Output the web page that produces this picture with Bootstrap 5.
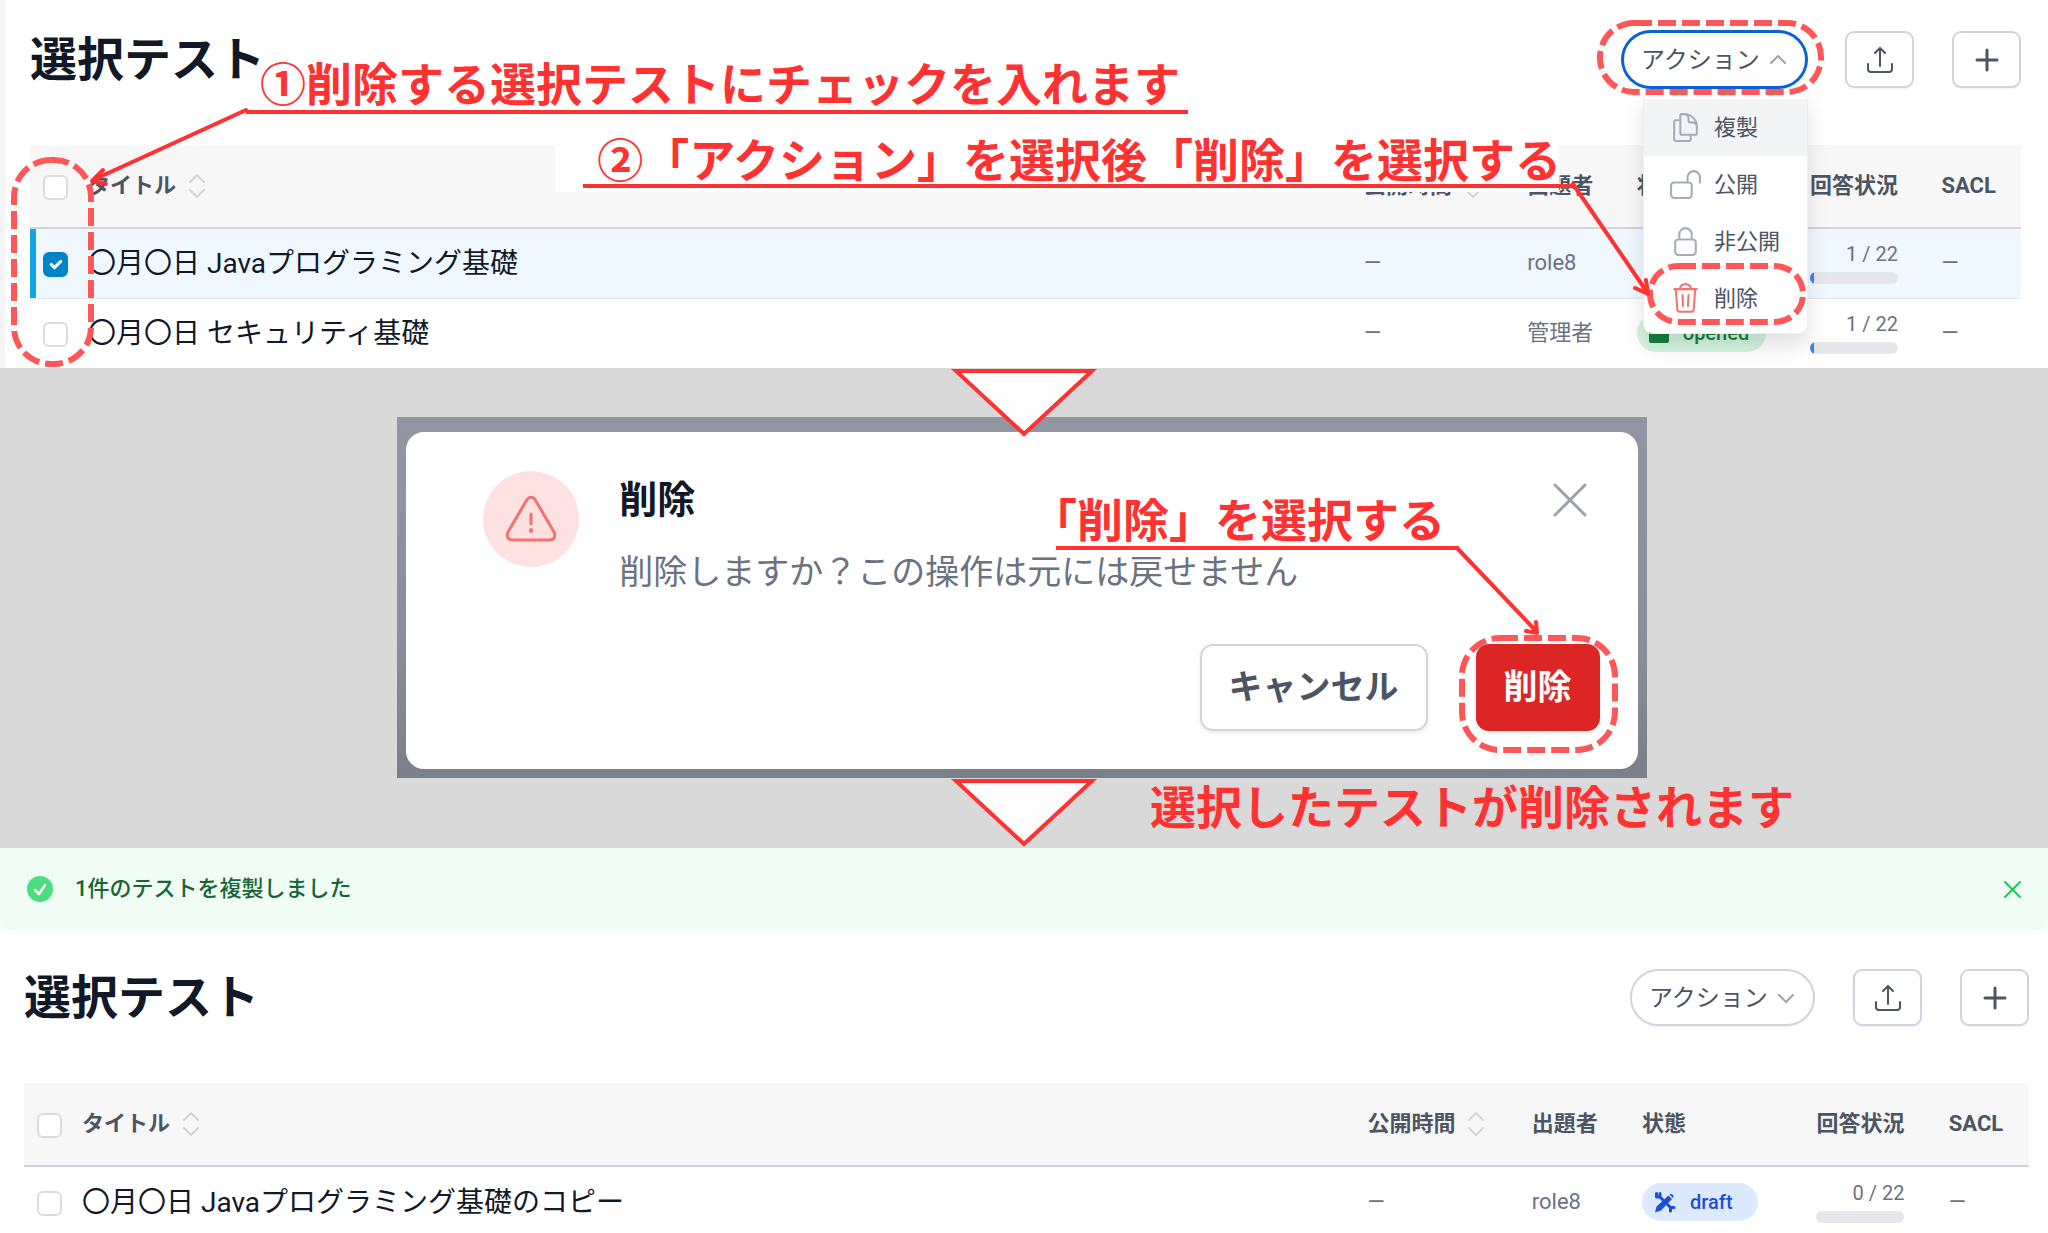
<!DOCTYPE html>
<html lang="ja">
<head>
<meta charset="utf-8">
<meta name="viewport" content="width=device-width, initial-scale=1">
<title>選択テスト</title>
<link href="https://cdn.jsdelivr.net/npm/bootstrap@5.3.0/dist/css/bootstrap.min.css" rel="stylesheet">
<script src="https://cdn.jsdelivr.net/npm/bootstrap@5.3.0/dist/js/bootstrap.bundle.min.js"></script>
<style>
  body { font-family: Roboto, "Noto Sans CJK JP", sans-serif; font-size: 22px; line-height: 32px; color: #4b5563; background: #fff; overflow-x: hidden; }
  svg { display: block; flex: none; fill: none; stroke: currentColor; stroke-linecap: round; stroke-linejoin: round; }
  svg.solid { stroke: none; }

  /* Screens */
  .screen-list { padding: 31px 27px 0 25px; border-left: 5px solid #f3f4f6; }
  .screen-done .screen-body { padding: 39px 19px 0 24px; }
  .page-title { font-size: 47px; line-height: 57px; font-weight: 700; color: #111827; }
  .toolbar { gap: 38px; margin-bottom: 57px; }
  .tool-btn { --bs-btn-color: #4b5563; --bs-btn-bg: #fff; --bs-btn-border-color: #d1d5db; --bs-btn-border-width: 2px; --bs-btn-hover-bg: #f9fafb; --bs-btn-hover-color: #4b5563; --bs-btn-hover-border-color: #d1d5db; height: 57px; box-shadow: 0 1px 2px rgba(0,0,0,.06); }
  .tool-square { width: 69px; padding: 0; border-radius: 9px; }
  .tool-action { width: 185px; padding: 0 18px 0 17px; border-radius: 29px; font-size: 24px; color: #4b5563; }
  .tool-action svg { color: #9ca3af; }
  .tool-action.is-open { border-color: #0b62d6; box-shadow: 0 0 0 1px #0b62d6; }

  /* Test list */
  .test-table { table-layout: fixed; margin: 0; --bs-table-bg: transparent; color: #6b7280; }
  .test-table > :not(caption) > * > * { padding: 0; border: 0; vertical-align: middle; }
  .test-table thead th { height: 83px; background: #f7f7f7; border-bottom: 2px solid #d1d5db !important; color: #4b5563; font-weight: 700; }
  .test-table tbody td { height: 70px; }
  .test-table tbody tr + tr td { border-top: 1px solid #e5e7eb; }
  .test-table .row-picked td { background: #eff8ff; }
  .row-picked td:first-child { box-shadow: inset 6px 0 #0ea5e9; }
  .test-table .col-name { padding-top: 2px; font-size: 28px; color: #111827; }
  .col-check { width: 58px; }
  .test-table .col-check { padding-left: 13px; }
  .w-open { width: 8.2%; } .w-author { width: 5.5%; } .w-state { width: 8.7%; } .w-answer { width: 6.6%; } .w-sacl { width: 4%; }
  .check-box { display: block; width: 25px; height: 25px; margin: 3px 0 0; border: 2px solid #d9dce2; border-radius: 6px !important; }
  .check-box:checked { background-color: #0284c7; border-color: #0284c7; }
  .sort-head { gap: 12px; }
  .sorter { color: #d1d5db; }
  .answer { width: 88px; font-size: 20px; line-height: 24px; }
  .answer .progress { height: 12px; margin-top: 6px; background: #e5e7eb; border-radius: 6px; }
  .answer .progress-bar { background: #3b82f6; }
  .state { height: 38px; min-width: 116px; padding: 0 17px 0 12px; gap: 14px; border-radius: 19px; font-size: 20px; font-weight: 500; }
  .state-opened { background: #d5f5e0; color: #15803d; }
  .state-draft { background: #dbeafe; color: #1d4ed8; }

  /* Action menu */
  .action-menu { top: 61px; right: -1px; left: auto; min-width: 0; width: 165px; padding: 6px 0; border: 1px solid #eceef1; border-radius: 9px; font-size: 22px; box-shadow: 0 12px 20px rgba(0,0,0,.12); z-index: 3; overflow: hidden; }
  .action-menu .dropdown-item { height: 57px; padding: 0 0 0 25px; gap: 12px; color: #4b5563; }
  .action-menu .dropdown-item.current { background: #f3f4f6; }
  .action-menu svg { color: #a7adb8; }
  .action-menu .icon-trash { color: #f87171; }

  /* Dialog */
  .stage { background: #d9d9d9; padding: 49px 0 70px; }
  .backdrop { width: 61%; margin-left: 19.4%; padding: 15px 9px 9px; background: linear-gradient(#9196a2, #8b8f9b 60%, #7b7f89); }
  .dialog { padding: 39px 38px 38px 77px; background: #fff; border-radius: 18px; }
  .warn { width: 96px; height: 96px; background: #fee2e2; color: #f87171; }
  .dialog-title { font-size: 38px; line-height: 38px; font-weight: 700; color: #111827; margin: 10px 0 31px; }
  .dialog-text { font-size: 34px; line-height: 44px; color: #6b7280; margin: 0 0 50px; }
  .dialog-close { margin: 12px 13px 0 0; color: #9ca3af; }
  .dialog-foot { gap: 48px; }
  .dialog-foot .btn { height: 87px; padding: 0 27px; font-size: 34px; border-radius: 13px; font-weight: 700; box-shadow: 0 2px 4px rgba(0,0,0,.08); }
  .btn-cancel { background: #fff; border: 2px solid #d1d5db; color: #4b5563; }
  .btn-remove, .btn-remove:hover { background: #dc2626; color: #fff; }
  .icon-btn { padding: 0; border: 0; background: none; }

  /* Result message */
  .flash { height: 82px; padding: 0 27px; gap: 22px; background: #f0fdf4; color: #166534; border-radius: 0 0 9px 9px; }
  .flash .icon-btn { color: #22c55e; }

  /* Guide notes drawn over the screens */
  .note { position: absolute; z-index: 5; font: 700 46px/60px "Noto Sans CJK JP", sans-serif; color: #ff3131; white-space: nowrap; pointer-events: none; }
  .lines { position: absolute; z-index: 4; top: 0; stroke: #ff3131; stroke-width: 4; pointer-events: none; overflow: visible; }
  .ring { position: absolute; z-index: 4; stroke: #ff5757; stroke-width: 6; stroke-dasharray: 18 6; stroke-linecap: butt; pointer-events: none; overflow: visible; }
  .note-1 { left: 255px; top: 51px; }
  .note-2 { right: 487px; top: 127px; }
  .note-3 { right: 603px; top: 119px; }
  .note-4 { right: 254px; bottom: 14px; }
  .note-back { position: absolute; z-index: 1; left: 26.9%; right: 489px; top: 140px; height: 52px; background: #fff; }
  .ring-checks { left: 9px; top: 160px; }
  .ring-action { right: -14px; top: -8px; }
  .ring-trash { right: 4px; top: 235px; }
  .ring-remove { right: -15px; top: -6px; }
  .pointer-down { position: absolute; z-index: 4; left: 50%; margin-left: -73px; fill: #fdfdfd; stroke: #ff3131; stroke-width: 4; stroke-linejoin: miter; }
  .pointer-a { top: 1px; } .pointer-b { bottom: 0; }
</style>
</head>
<body>

<section class="screen-list position-relative">
  <header class="toolbar d-flex align-items-center">
    <h1 class="page-title m-0 me-auto">選択テスト</h1>
    <div class="dropdown">
      <button class="btn tool-btn tool-action is-open d-flex align-items-center justify-content-between" type="button" aria-expanded="true">アクション
        <svg width="18" height="12" stroke-width="2"><path d="M2 9l7-7 7 7"/></svg></button>
      <ul class="dropdown-menu action-menu show">
        <li><a class="dropdown-item current d-flex align-items-center" href="#"><svg width="33" height="33" viewBox="0 0 24 24" stroke-width="1.5"><path d="M15.75 17.25v3.375c0 .621-.504 1.125-1.125 1.125h-9.75a1.125 1.125 0 01-1.125-1.125V7.875c0-.621.504-1.125 1.125-1.125H6.75a9.06 9.06 0 011.5.124m7.5 10.376h3.375c.621 0 1.125-.504 1.125-1.125V11.25c0-4.46-3.243-8.161-7.5-8.876a9.06 9.06 0 00-1.5-.124H9.375c-.621 0-1.125.504-1.125 1.125v3.5m7.5 10.375H9.375a1.125 1.125 0 01-1.125-1.125v-9.25m12 6.625v-1.875a3.375 3.375 0 00-3.375-3.375h-1.5a1.125 1.125 0 01-1.125-1.125v-1.5a3.375 3.375 0 00-3.375-3.375H9.75"/></svg>複製</a></li>
        <li><a class="dropdown-item d-flex align-items-center" href="#"><svg width="33" height="33" viewBox="0 0 24 24" stroke-width="1.5"><path d="M13.5 10.5V6.75a4.5 4.5 0 119 0v3.75M3.75 21.75h10.5a2.25 2.25 0 002.25-2.25v-6.75a2.25 2.25 0 00-2.25-2.25H3.75a2.25 2.25 0 00-2.25 2.25v6.75a2.25 2.25 0 002.25 2.25z"/></svg>公開</a></li>
        <li><a class="dropdown-item d-flex align-items-center" href="#"><svg width="33" height="33" viewBox="0 0 24 24" stroke-width="1.5"><path d="M16.5 10.5V6.75a4.5 4.5 0 10-9 0v3.75m-.75 11.25h10.5a2.25 2.25 0 002.25-2.25v-6.75a2.25 2.25 0 00-2.25-2.25H6.75a2.25 2.25 0 00-2.25 2.25v6.75a2.25 2.25 0 002.25 2.25z"/></svg>非公開</a></li>
        <li><a class="dropdown-item d-flex align-items-center" href="#"><svg class="icon-trash" width="33" height="33" viewBox="0 0 24 24" stroke-width="1.5"><path d="M3.8 5.2h16.4M5 5.500l1 14.200a2 2 0 002 1.900h8a2 2 0 002-1.900l1-14.200M8 5a4 3.600 0 018 0M9.800 9.500l.4 8M14.200 9.500l-.4 8"/></svg>削除</a></li>
      </ul>
      <svg class="ring ring-action" width="221" height="69"><rect width="221" height="69" rx="34"/></svg>
      <svg class="ring ring-trash" width="153" height="56"><rect width="153" height="56" rx="28"/></svg>
    </div>
    <button class="btn tool-btn tool-square d-flex align-items-center justify-content-center" type="button" aria-label="アップロード"><svg width="28" height="28" stroke-width="2"><path d="M2 18v5a3 3 0 003 3h18a3 3 0 003-3v-5M14 20V2M9 7l5-5 5 5"/></svg></button>
    <button class="btn tool-btn tool-square d-flex align-items-center justify-content-center" type="button" aria-label="追加"><svg width="26" height="26" stroke-width="3"><path d="M13 3v20M3 13h20"/></svg></button>
  </header>

  <table class="table test-table">
    <thead><tr>
      <th class="col-check"><input class="form-check-input check-box" type="checkbox" aria-label="すべて選択"></th>
      <th><div class="sort-head d-flex align-items-center">タイトル<svg class="sorter" width="18" height="26" stroke-width="2"><path d="M2 9l7-7 7 7M2 17l7 7 7-7"/></svg></div></th>
      <th class="w-open"><div class="sort-head d-flex align-items-center">公開時間<svg class="sorter" width="18" height="26" stroke-width="2"><path d="M2 9l7-7 7 7M2 17l7 7 7-7"/></svg></div></th>
      <th class="w-author">出題者</th><th class="w-state">状態</th><th class="w-answer">回答状況</th><th class="w-sacl">SACL</th>
    </tr></thead>
    <tbody>
      <tr class="row-picked">
        <td class="col-check"><input class="form-check-input check-box" type="checkbox" checked aria-label="〇月〇日 Javaプログラミング基礎を選択"></td>
        <td class="col-name">〇月〇日 Javaプログラミング基礎</td>
        <td>—</td><td>role8</td><td></td>
        <td><div class="answer text-end">1 / 22<div class="progress"><div class="progress-bar" style="width:4.55%"></div></div></div></td>
        <td>—</td>
      </tr>
      <tr>
        <td class="col-check"><input class="form-check-input check-box" type="checkbox" aria-label="〇月〇日 セキュリティ基礎を選択"></td>
        <td class="col-name">〇月〇日 セキュリティ基礎</td>
        <td>—</td><td>管理者</td>
        <td><span class="state state-opened d-inline-flex align-items-center align-middle"><svg class="solid" width="20" height="20"><rect width="20" height="20" rx="2" fill="currentColor"/></svg>opened</span></td>
        <td><div class="answer text-end">1 / 22<div class="progress"><div class="progress-bar" style="width:4.55%"></div></div></div></td>
        <td>—</td>
      </tr>
    </tbody>
  </table>

  <div class="note-back"></div>
  <svg class="lines start-0" width="1200" height="368"><path d="M241 112H1183" stroke-linecap="butt"/><path d="M241 110L88 180M98 170L87 181L101 184"/></svg>
  <svg class="lines end-0" width="1465" height="368"><path d="M0 186H991" stroke-linecap="butt"/><path d="M990 184L1064 292M1052 288L1065 294L1063 280"/></svg>
  <svg class="ring ring-checks" width="77" height="204"><rect width="77" height="204" rx="37"/></svg>
  <div class="note note-1">①削除する選択テストにチェックを入れます</div>
  <div class="note note-2">②「アクション」を選択後「削除」を選択する</div>
</section>

<section class="stage position-relative">
  <div class="backdrop">
    <div class="dialog" role="dialog" aria-labelledby="dlg-title">
      <div class="d-flex align-items-start">
        <div class="warn rounded-circle d-flex align-items-center justify-content-center me-4"><svg width="54" height="54" viewBox="0 0 54 54" stroke-width="3"><path d="M23 7.500L4 40c-2 4 0 8 4 8h38c4 0 6-4 4-8L31 7.500c-2-3-6-3-8 0zM27 22v10" /><path d="M27 38v1" stroke-width="4"/></svg></div>
        <div class="flex-grow-1 ms-3">
          <h2 class="dialog-title" id="dlg-title">削除</h2>
          <p class="dialog-text">削除しますか？この操作は元には戻せません</p>
        </div>
        <button class="icon-btn dialog-close" type="button" aria-label="閉じる"><svg width="34" height="34" stroke-width="3"><path d="M2 2l30 30M32 2L2 32"/></svg></button>
      </div>
      <div class="dialog-foot d-flex justify-content-end">
        <button class="btn btn-cancel" type="button">キャンセル</button>
        <div class="position-relative">
          <button class="btn btn-remove" type="button">削除</button>
          <svg class="ring ring-remove" width="153" height="112"><rect width="153" height="112" rx="38"/></svg>
        </div>
      </div>
    </div>
  </div>
  <svg class="pointer-down pointer-a" width="146" height="69"><path d="M5 2H141L73 65z"/></svg>
  <svg class="pointer-down pointer-b" width="146" height="69"><path d="M5 2H141L73 65z"/></svg>
  <svg class="lines end-0" width="992" height="480"><path d="M0 180H403" stroke-linecap="butt"/><path d="M402 181L481 264M470 263L481 265L480 254"/></svg>
  <div class="note note-3">「削除」を選択する</div>
  <div class="note note-4">選択したテストが削除されます</div>
</section>

<section class="screen-done">
  <div class="flash d-flex align-items-center fw-medium" role="status">
    <svg width="26" height="26" class="solid"><circle cx="13" cy="13" r="13" fill="#4ade80"/><path d="M8 14l4 4 6-9" stroke="#fff" stroke-width="2.500"/></svg>
    <span class="me-auto">1件のテストを複製しました</span>
    <button class="icon-btn" type="button" aria-label="閉じる"><svg width="17" height="17" stroke-width="2"><path d="M1 1l15 15M16 1L1 16"/></svg></button>
  </div>
  <div class="screen-body">
    <header class="toolbar d-flex align-items-center">
      <h1 class="page-title m-0 me-auto">選択テスト</h1>
      <button class="btn tool-btn tool-action d-flex align-items-center justify-content-between" type="button">アクション
        <svg width="18" height="12" stroke-width="2"><path d="M2 3l7 7 7-7"/></svg></button>
      <button class="btn tool-btn tool-square d-flex align-items-center justify-content-center" type="button" aria-label="アップロード"><svg width="28" height="28" stroke-width="2"><path d="M2 18v5a3 3 0 003 3h18a3 3 0 003-3v-5M14 20V2M9 7l5-5 5 5"/></svg></button>
      <button class="btn tool-btn tool-square d-flex align-items-center justify-content-center" type="button" aria-label="追加"><svg width="26" height="26" stroke-width="3"><path d="M13 3v20M3 13h20"/></svg></button>
    </header>
    <table class="table test-table">
      <thead><tr>
        <th class="col-check"><input class="form-check-input check-box" type="checkbox" aria-label="すべて選択"></th>
        <th><div class="sort-head d-flex align-items-center">タイトル<svg class="sorter" width="18" height="26" stroke-width="2"><path d="M2 9l7-7 7 7M2 17l7 7 7-7"/></svg></div></th>
        <th class="w-open"><div class="sort-head d-flex align-items-center">公開時間<svg class="sorter" width="18" height="26" stroke-width="2"><path d="M2 9l7-7 7 7M2 17l7 7 7-7"/></svg></div></th>
        <th class="w-author">出題者</th><th class="w-state">状態</th><th class="w-answer">回答状況</th><th class="w-sacl">SACL</th>
      </tr></thead>
      <tbody>
        <tr>
          <td class="col-check"><input class="form-check-input check-box" type="checkbox" aria-label="〇月〇日 Javaプログラミング基礎のコピーを選択"></td>
          <td class="col-name">〇月〇日 Javaプログラミング基礎のコピー</td>
          <td>—</td><td>role8</td>
          <td><span class="state state-draft d-inline-flex align-items-center align-middle"><svg class="solid" width="22" height="22" viewBox="0 0 22 22"><path fill="currentColor" d="M14.500 4.500l3.500 3.500L7 19.500 1 21.500 2.500 15.500zM16 3a3 3 0 013.500 3.500L19 7 15.500 3.500z"/><path d="M2.500 2.500v3.500h3.500v-3.500M6 6l3 3M13.500 13.500l2.500 2.500M20 16.500h-3.500V20" stroke="currentColor" stroke-width="3"/></svg>draft</span></td>
          <td><div class="answer text-end">0 / 22<div class="progress"></div></div></td>
          <td>—</td>
        </tr>
      </tbody>
    </table>
  </div>
</section>
</body>
</html>
